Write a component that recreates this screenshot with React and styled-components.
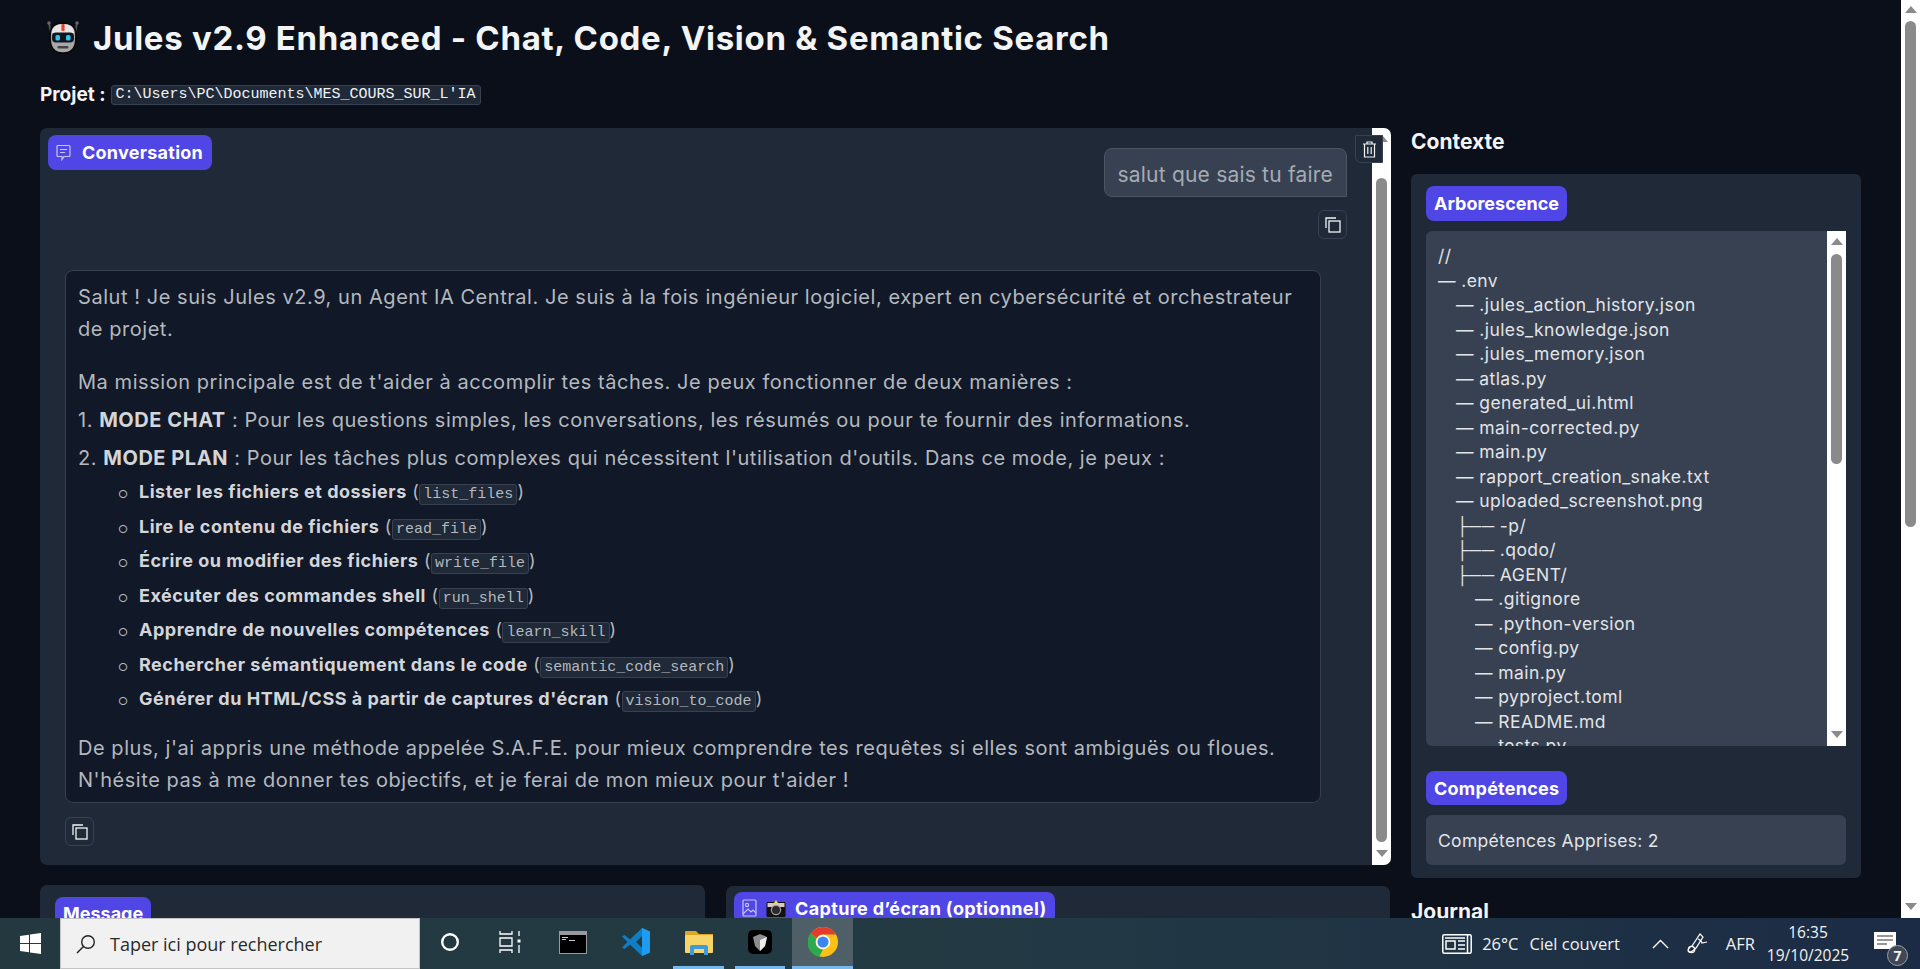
import React from "react";
import styled, { createGlobalStyle } from "styled-components";

const GlobalStyle = createGlobalStyle`
  html, body {
    margin: 0;
    padding: 0;
    height: 100%;
    overflow: hidden;
    background: #0b0f19;
  }
  * {
    box-sizing: border-box;
  }
`;

const Screen = styled.div`
  width: 1920px;
  height: 969px;
  display: flex;
  flex-direction: column;
  overflow: hidden;
  font-family: Inter, "Liberation Sans", sans-serif;
  color: #f3f4f6;
`;

const Viewport = styled.div`
  height: 918px;
  display: flex;
  flex-shrink: 0;
  overflow: hidden;
`;

const Page = styled.main`
  flex: 1;
  padding: 0 40px;
  overflow: hidden;
`;

const Header = styled.h1`
  display: flex;
  align-items: center;
  gap: 12px;
  height: 38px;
  margin: 19px 0 0 5px;
  font-size: 33px;
  font-weight: 700;
  letter-spacing: 0.7px;
  color: #f3f4f6;
`;

const ProjectRow = styled.div`
  display: flex;
  align-items: center;
  gap: 5px;
  height: 21px;
  margin-top: 27px;
  font-size: 19px;
  font-weight: 700;
`;

const PathCode = styled.code`
  height: 20px;
  padding: 0 4px;
  display: flex;
  align-items: center;
  font-family: "Liberation Mono", monospace;
  font-size: 15px;
  font-weight: 400;
  background: #1f2937;
  border: 1px solid #374151;
  border-radius: 3px;
`;

const Columns = styled.div`
  display: grid;
  grid-template-columns: 1351px 450px;
  gap: 20px;
  margin-top: 23px;
`;

const LeftColumn = styled.div`
  display: flex;
  flex-direction: column;
  gap: 20px;
`;

const ChatPanel = styled.section`
  position: relative;
  height: 737px;
  display: flex;
  background: #1f2937;
  border-radius: 7px;
  overflow: hidden;
`;

const ChatBody = styled.div`
  flex: 1;
  padding: 20px 25px 0 25px;
  display: flex;
  flex-direction: column;
`;

const Badge = styled.div`
  display: inline-flex;
  align-items: center;
  gap: ${(p) => p.$gap || 0}px;
  width: fit-content;
  height: ${(p) => p.$h || 35}px;
  padding: 0 ${(p) => p.$px || 9}px;
  background: #4f46e5;
  border-radius: 8px;
  color: #fff;
  font-size: 18px;
  font-weight: 700;
  letter-spacing: ${(p) => p.$ls || 0}px;
  white-space: nowrap;
`;

const FloatingBadge = styled(Badge)`
  position: absolute;
  top: 7px;
  left: 8px;
`;

const IconButton = styled.button`
  width: 29px;
  height: 29px;
  padding: 0;
  display: flex;
  align-items: center;
  justify-content: center;
  background: transparent;
  border: 1px solid #374151;
  border-radius: 6px;
  color: #f3f4f6;
`;

const TrashButton = styled(IconButton)`
  position: absolute;
  top: 7px;
  right: 8px;
  width: 28px;
  height: 28px;
  background: #1f2937;
  border-radius: 0 0 0 6px;
`;

const UserRow = styled.div`
  display: flex;
  flex-direction: column;
  align-items: flex-end;
  gap: 13px;
`;

const UserBubble = styled.div`
  height: 49px;
  padding: 3px 13px 0;
  display: flex;
  align-items: center;
  background: #374151;
  border: 1px solid #4b5563;
  border-radius: 8px 8px 0 8px;
  color: #a6abb4;
  font-size: 21px;
  letter-spacing: 0.2px;
`;

const BotBubble = styled.div`
  height: 533px;
  margin: 31px 26px 0 0;
  padding: 10px 12px 0;
  background: #111827;
  border: 1px solid #374151;
  border-radius: 8px;
  color: #b4b8bf;
  font-size: 20px;
  letter-spacing: 0.55px;
  line-height: 32px;

  strong {
    color: #d3d5d9;
  }
`;

const Para = styled.p`
  margin: 0 0 ${(p) => p.$mb || 0}px;
`;

const SubList = styled.ul`
  margin: 1px 0 15px;
  padding: 0 0 0 61px;
  font-size: 18px;
  letter-spacing: 0.5px;
  line-height: 34.5px;

  li::marker {
    content: "○   ";
    font-size: 11px;
  }
`;

const Mono = styled.code`
  padding: 1px 3px;
  font-family: "Liberation Mono", monospace;
  font-size: 15px;
  letter-spacing: 0;
  line-height: 1;
  background: #1f2937;
  border: 1px solid #374151;
  border-radius: 3px;
`;

const CopyBelow = styled(IconButton)`
  margin-top: 14px;
`;

const Bar = styled.div`
  flex-shrink: 0;
  width: 19px;
  height: 100%;
  padding: 0 4px;
  display: flex;
  flex-direction: column;
  align-items: center;
  background: #fff;
`;

const Arrow = styled.div`
  flex-shrink: 0;
  width: 0;
  height: 0;
  margin-top: ${(p) => p.$mt || 0}px;
  margin-bottom: ${(p) => p.$mb || 0}px;
  border-left: 6.5px solid transparent;
  border-right: 6.5px solid transparent;
  ${(p) => (p.$down ? "border-top" : "border-bottom")}: 7px solid #8a8a8a;
`;

const Thumb = styled.div`
  width: 11px;
  flex-shrink: 0;
  margin-bottom: auto;
  background: #8a8a8a;
  border-radius: 6px;
`;

const Scrollbar = ({ thumb, arrowTop, gap }) => (
  <Bar>
    <Arrow $mt={arrowTop} $mb={gap} />
    <Thumb style={{ height: thumb }} />
    <Arrow $down $mb={8} />
  </Bar>
);

const BottomRow = styled.div`
  display: grid;
  grid-template-columns: 665px 664px;
  gap: 21px;
`;

const InputPanel = styled.section`
  height: 120px;
  margin-top: ${(p) => p.$mt || 0}px;
  padding: ${(p) => p.$pt}px ${(p) => p.$pl}px 0;
  background: #1f2937;
  border-radius: 7px;
`;

const SideTitle = styled.h2`
  height: 28px;
  margin: 1px 0 17px;
  font-size: 21px;
  font-weight: 700;
  color: #f3f4f6;
`;

const SideCard = styled.section`
  height: 704px;
  padding: 12px 15px;
  display: flex;
  flex-direction: column;
  background: #1f2937;
  border-radius: 6px;
`;

const TreeBox = styled.div`
  height: 515px;
  margin: 10px 0 25px;
  display: flex;
  flex-shrink: 0;
  background: #374151;
  border-radius: 6px 0 0 6px;
  overflow: hidden;
`;

const TreeList = styled.div`
  flex: 1;
  padding: 13px 12px;
  overflow: hidden;
  font-size: 17.5px;
  letter-spacing: 0.42px;
  line-height: 24.5px;
  color: #e2e4e8;
  white-space: pre;
`;

const TreeLine = styled.div`
  height: 24.5px;
  padding-left: ${(p) => p.$indent || 0}px;
`;

const SkillBox = styled.div`
  height: 50px;
  margin-top: 10px;
  padding: 0 12px;
  display: flex;
  align-items: center;
  background: #374151;
  border-radius: 6px;
  font-size: 17.5px;
  letter-spacing: 0.3px;
  color: #e2e4e8;
`;

const JournalTitle = styled(SideTitle)`
  margin: 21px 0 0;
`;

const Taskbar = styled.footer`
  flex: 1;
  display: flex;
  align-items: stretch;
  background: linear-gradient(90deg, #24393f 0%, #233a44 50%, #1b2b45 100%);
  font-family: "Open Sans", "Noto Sans", sans-serif;
  color: #f2f2f2;
`;

const StartButton = styled.div`
  width: 60px;
  display: flex;
  align-items: center;
  justify-content: center;
`;

const SearchBox = styled.div`
  width: 360px;
  display: flex;
  align-items: center;
  gap: 14px;
  padding-left: 15px;
  background: #f1f1f1;
  border: 1px solid #c4c4c4;
  color: #2a2a2a;
  font-size: 18px;
`;

const TaskIcon = styled.div`
  width: ${(p) => p.$w || 60}px;
  margin-left: ${(p) => p.$ml || 0}px;
  display: flex;
  align-items: center;
  justify-content: center;
  background: ${(p) => (p.$active ? "#4f5f68" : "transparent")};
  border-bottom: 3px solid ${(p) => (p.$open ? "#76b9ed" : "transparent")};
`;

const Tray = styled.div`
  margin-left: auto;
  display: flex;
  align-items: center;
  font-size: 16.5px;
`;

const TrayText = styled.span`
  margin-left: ${(p) => p.$ml || 0}px;
  white-space: nowrap;
`;

const TrayIcon = styled.div`
  margin-left: ${(p) => p.$ml || 0}px;
  display: flex;
`;

const Clock = styled.div`
  width: 100px;
  margin-left: 3px;
  text-align: center;
  font-size: 15.5px;
  line-height: 23px;
`;

const Notify = styled.div`
  position: relative;
  width: 24px;
  height: 24px;
  margin: 0 22px 0 16px;
`;

const NotifyCount = styled.div`
  position: absolute;
  right: -10px;
  bottom: -10px;
  width: 21px;
  height: 21px;
  display: flex;
  align-items: center;
  justify-content: center;
  background: #3f4854;
  border: 1px solid #9aa0a6;
  border-radius: 50%;
  font-size: 14px;
  font-weight: 700;
`;

const Robot = () => (
  <svg width="36" height="36" viewBox="0 0 36 36">
    <path d="M4 3l2 11M32 3l-2 11" stroke="#555" strokeWidth="1.8" />
    <circle cx="4" cy="3" r="1.8" fill="#666" />
    <circle cx="32" cy="3" r="1.8" fill="#666" />
    <path d="M18 3c8 0 13 4 13 12 0 9-1 13-5 16-3 3-13 3-16 0-4-3-5-7-5-16C5 7 10 3 18 3z" fill="#a9a9a9" stroke="#0a0a0a" strokeWidth="1.8" />
    <path d="M7 13C7 7 11 4 18 4s11 3 11 9z" fill="#e6e6e6" />
    <rect x="16.4" y="4" width="3.2" height="7" rx="1" fill="#e5452a" />
    <rect x="7" y="12.5" width="22" height="10" rx="4" fill="#12161f" />
    <rect x="10.5" y="15" width="4.5" height="5.5" rx="1.5" fill="#2ec4f1" />
    <rect x="21" y="15" width="4.5" height="5.5" rx="1.5" fill="#2ec4f1" />
    <rect x="12.5" y="26" width="11" height="2.4" rx="1" fill="#444" />
  </svg>
);

const CopyIcon = () => (
  <svg width="16" height="16" viewBox="0 0 16 16" fill="none" stroke="currentColor" strokeWidth="1.3">
    <rect x="4" y="4" width="11" height="11" />
    <path d="M1 11V1h10" />
  </svg>
);

const TrashIcon = () => (
  <svg width="15" height="17" viewBox="0 0 15 17" fill="none" stroke="currentColor" strokeWidth="1.2">
    <path d="M1 3h13M5 3V1h5v2M2.5 3v13h10V3M5.8 6v7M9.2 6v7" />
  </svg>
);

const ChatIcon = () => (
  <svg width="15" height="17" viewBox="0 0 15 17" fill="none" stroke="#c7c4f5" strokeWidth="1.2" style={{ marginRight: 11, marginLeft: -1 }}>
    <path d="M2 1.5h11a1 1 0 0 1 1 1v9a1 1 0 0 1-1 1H8l-2 3v-3H2a1 1 0 0 1-1-1v-9a1 1 0 0 1 1-1z" />
    <path d="M4 5.5h7M4 8.5h5" />
  </svg>
);

const ImageIcon = () => (
  <svg width="15" height="18" viewBox="0 0 15 18" fill="none" stroke="#c7c4f5" strokeWidth="1.2">
    <rect x="1" y="1" width="13" height="16" rx="1" />
    <circle cx="5" cy="6" r="1.6" />
    <path d="M1 15l5-5 3 3 2-2 3 3" />
  </svg>
);

const CameraEmoji = () => (
  <svg width="20" height="17" viewBox="0 0 20 17">
    <rect x="0.5" y="2" width="19" height="15" rx="1" fill="#111" />
    <rect x="1.5" y="3" width="17" height="4" fill="#dcc8c4" />
    <circle cx="10" cy="10" r="4.6" fill="#2a2a2a" stroke="#a0a0a0" strokeWidth="1.2" />
    <path d="M10 0l2 3H8z" fill="#f7d84a" />
  </svg>
);

const WindowsLogo = () => (
  <svg width="21" height="21" viewBox="0 0 21 21" fill="#fff">
    <path d="M0 3l9-1.3V10H0zM10 1.5L21 0v10H10zM0 11h9v8.3L0 18zM10 11h11v10l-11-1.5z" />
  </svg>
);

const SearchGlyph = () => (
  <svg width="20" height="20" viewBox="0 0 20 20" fill="none" stroke="#222" strokeWidth="1.4">
    <circle cx="12" cy="8" r="6.3" />
    <path d="M7.5 12.5L1 19" />
  </svg>
);

const CortanaIcon = () => (
  <svg width="20" height="20" viewBox="0 0 20 20" fill="none" stroke="#fff" strokeWidth="2.4">
    <circle cx="10" cy="10" r="7.8" />
  </svg>
);

const TaskViewIcon = () => (
  <svg width="22" height="24" viewBox="0 0 22 24" fill="none" stroke="#fff" strokeWidth="1.3">
    <path d="M1 1v3h12V1M1 23v-3h12v3M1 8h12v8H1zM20 1v5M20 15v8" />
    <rect x="18.5" y="9.5" width="3" height="3" fill="#fff" stroke="none" />
  </svg>
);

const CmdIcon = () => (
  <svg width="28" height="23" viewBox="0 0 28 23">
    <rect width="28" height="23" fill="#9a9a9a" />
    <rect x="1" y="4" width="26" height="18" fill="#000" />
    <path d="M3 6h6v1H3zM3 8h4v1H3zM10 9h6v1h-6z" fill="#ccc" />
  </svg>
);

const VsCodeIcon = () => (
  <svg width="30" height="30" viewBox="0 0 30 30">
    <path d="M21 1l8 3.5v21L21 29 9 17.5 3.5 22 1 20.5 6.5 15 1 9.5 3.5 8 9 12.5z" fill="#0f7fc4" />
    <path d="M21 1l8 3.5v21L21 29V21l-6-6 6-6z" fill="#1f9cf0" />
    <path d="M21 9v12l-6-6z" fill="#233a44" />
  </svg>
);

const FolderIcon = () => (
  <svg width="28" height="25" viewBox="0 0 28 25">
    <path d="M0 2a1 1 0 0 1 1-1h10l3 3h14v3H0z" fill="#e0a526" />
    <rect y="5" width="28" height="18" rx="1" fill="#f8d568" />
    <path d="M5 25v-8a2 2 0 0 1 2-2h14a2 2 0 0 1 2 2v8h-4v-6H9v6z" fill="#3f9bdc" />
  </svg>
);

const CubeAppIcon = () => (
  <svg width="24" height="24" viewBox="0 0 24 24">
    <rect width="24" height="24" rx="5" fill="#000" />
    <path d="M5 7l7-3 7 3-2 9-5 5-5-5z" fill="#8d8d8d" />
    <path d="M12 10l7-3-2 9-5 5z" fill="#ededed" />
  </svg>
);

const ChromeIcon = () => (
  <svg width="30" height="30" viewBox="0 0 30 30">
    <circle cx="15" cy="15" r="15" fill="#fbc116" />
    <path d="M15 0a15 15 0 0 1 13 7.5H15a7.5 7.5 0 0 0-6.5 3.8L2.5 6.5A15 15 0 0 1 15 0z" fill="#e33b2e" />
    <path d="M2.5 6.5l6 4.8A7.5 7.5 0 0 0 15 22.5L11 30A15 15 0 0 1 2.5 6.5z" fill="#2da94f" />
    <circle cx="15" cy="15" r="7.2" fill="#fff" />
    <circle cx="15" cy="15" r="5.6" fill="#3a86f0" />
  </svg>
);

const NewsIcon = () => (
  <svg width="30" height="20" viewBox="0 0 30 20" fill="none" stroke="#fff" strokeWidth="1.5">
    <rect x="0.8" y="0.8" width="28.4" height="18.4" rx="1.5" />
    <path d="M3 4h20M25.5 1v18" />
    <rect x="4" y="7" width="9" height="8" />
    <path d="M16 7h7M16 11h7M16 15h7" />
  </svg>
);

const ChevronUp = () => (
  <svg width="17" height="10" viewBox="0 0 17 10" fill="none" stroke="#fff" strokeWidth="1.4">
    <path d="M1 9l7.5-7.5L16 9" />
  </svg>
);

const PenIcon = () => (
  <svg width="21" height="21" viewBox="0 0 21 21" fill="none" stroke="#fff" strokeWidth="1.2">
    <path d="M13 1l3 3-7 11c-2 2-5 5-7 4s0-5 3-6zM11 6c2 1 4 3 4 4l5-1" />
    <circle cx="4.5" cy="16.5" r="3.2" />
  </svg>
);

const NotifyGlyph = () => (
  <svg width="22" height="18" viewBox="0 0 22 18">
    <path d="M0 0h22v17H0z" fill="#fff" />
    <path d="M3 4h16M3 8h16M3 12h10" stroke="#333" strokeWidth="1.2" />
  </svg>
);

const tools = [
  ["Lister les fichiers et dossiers", "list_files"],
  ["Lire le contenu de fichiers", "read_file"],
  ["Écrire ou modifier des fichiers", "write_file"],
  ["Exécuter des commandes shell", "run_shell"],
  ["Apprendre de nouvelles compétences", "learn_skill"],
  ["Rechercher sémantiquement dans le code", "semantic_code_search"],
  ["Générer du HTML/CSS à partir de captures d'écran", "vision_to_code"],
];

const tree = [
  [0, "//"],
  [0, "— .env"],
  [18, "— .jules_action_history.json"],
  [18, "— .jules_knowledge.json"],
  [18, "— .jules_memory.json"],
  [18, "— atlas.py"],
  [18, "— generated_ui.html"],
  [18, "— main-corrected.py"],
  [18, "— main.py"],
  [18, "— rapport_creation_snake.txt"],
  [18, "— uploaded_screenshot.png"],
  [18, "├── -p/"],
  [18, "├── .qodo/"],
  [18, "├── AGENT/"],
  [37, "— .gitignore"],
  [37, "— .python-version"],
  [37, "— config.py"],
  [37, "— main.py"],
  [37, "— pyproject.toml"],
  [37, "— README.md"],
  [37, "— tests.py"],
];

export default function App() {
  return (
    <Screen>
      <GlobalStyle />
      <Viewport>
        <Page>
          <Header>
            <Robot />
            Jules v2.9 Enhanced - Chat, Code, Vision &amp; Semantic Search
          </Header>
          <ProjectRow>
            Projet : <PathCode>C:\Users\PC\Documents\MES_COURS_SUR_L'IA</PathCode>
          </ProjectRow>
          <Columns>
            <LeftColumn>
              <ChatPanel>
                <FloatingBadge $ls={0.25}>
                  <ChatIcon />
                  Conversation
                </FloatingBadge>
                <ChatBody>
                  <UserRow>
                    <UserBubble>salut que sais tu faire</UserBubble>
                    <IconButton><CopyIcon /></IconButton>
                  </UserRow>
                  <BotBubble>
                    <Para $mb={21}>
                      Salut ! Je suis Jules v2.9, un Agent IA Central. Je suis à la fois ingénieur logiciel, expert en cybersécurité et orchestrateur de projet.
                    </Para>
                    <Para $mb={6}>
                      Ma mission principale est de t'aider à accomplir tes tâches. Je peux fonctionner de deux manières :
                    </Para>
                    <Para $mb={6}>
                      1. <strong>MODE CHAT</strong> : Pour les questions simples, les conversations, les résumés ou pour te fournir des informations.
                    </Para>
                    <Para>
                      2. <strong>MODE PLAN</strong> : Pour les tâches plus complexes qui nécessitent l'utilisation d'outils. Dans ce mode, je peux :
                    </Para>
                    <SubList>
                      {tools.map(([label, code]) => (
                        <li key={code}>
                          <strong>{label}</strong> (<Mono>{code}</Mono>)
                        </li>
                      ))}
                    </SubList>
                    <Para>
                      De plus, j'ai appris une méthode appelée S.A.F.E. pour mieux comprendre tes requêtes si elles sont ambiguës ou floues. N'hésite pas à me donner tes objectifs, et je ferai de mon mieux pour t'aider !
                    </Para>
                  </BotBubble>
                  <CopyBelow><CopyIcon /></CopyBelow>
                </ChatBody>
                <Scrollbar thumb={664} arrowTop={7} gap={36} />
                <TrashButton><TrashIcon /></TrashButton>
              </ChatPanel>
              <BottomRow>
                <InputPanel $pt={12} $pl={15}>
                  <Badge $h={32} $px={8}>Message</Badge>
                </InputPanel>
                <InputPanel $mt={1} $pt={6} $pl={8}>
                  <Badge $h={32} $px={8} $gap={9} $ls={0.37}>
                    <ImageIcon />
                    <CameraEmoji />
                    Capture d’écran (optionnel)
                  </Badge>
                </InputPanel>
              </BottomRow>
            </LeftColumn>
            <div>
              <SideTitle>Contexte</SideTitle>
              <SideCard>
                <Badge $h={35} $px={8}>Arborescence</Badge>
                <TreeBox>
                  <TreeList>
                    {tree.map(([indent, name], i) => (
                      <TreeLine key={i} $indent={indent}>{name}</TreeLine>
                    ))}
                  </TreeList>
                  <Scrollbar thumb={210} arrowTop={7} gap={9} />
                </TreeBox>
                <Badge $h={34} $px={8} $ls={0.25}>Compétences</Badge>
                <SkillBox>Compétences Apprises: 2</SkillBox>
              </SideCard>
              <JournalTitle>Journal</JournalTitle>
            </div>
          </Columns>
        </Page>
        <Scrollbar thumb={506} arrowTop={6} gap={8} />
      </Viewport>
      <Taskbar>
        <StartButton><WindowsLogo /></StartButton>
        <SearchBox>
          <SearchGlyph />
          Taper ici pour rechercher
        </SearchBox>
        <TaskIcon $w={60}><CortanaIcon /></TaskIcon>
        <TaskIcon $w={60}><TaskViewIcon /></TaskIcon>
        <TaskIcon $w={66}><CmdIcon /></TaskIcon>
        <TaskIcon $w={60}><VsCodeIcon /></TaskIcon>
        <TaskIcon $w={51} $ml={7} $open><FolderIcon /></TaskIcon>
        <TaskIcon $w={50} $ml={11} $open><CubeAppIcon /></TaskIcon>
        <TaskIcon $w={61} $ml={7} $open $active><ChromeIcon /></TaskIcon>
        <Tray>
          <NewsIcon />
          <TrayText $ml={10}>26°C</TrayText>
          <TrayText $ml={11}>Ciel couvert</TrayText>
          <TrayIcon $ml={32}><ChevronUp /></TrayIcon>
          <TrayIcon $ml={18}><PenIcon /></TrayIcon>
          <TrayText $ml={18}>AFR</TrayText>
          <Clock>
            16:35
            <br />
            19/10/2025
          </Clock>
          <Notify>
            <NotifyGlyph />
            <NotifyCount>7</NotifyCount>
          </Notify>
        </Tray>
      </Taskbar>
    </Screen>
  );
}
